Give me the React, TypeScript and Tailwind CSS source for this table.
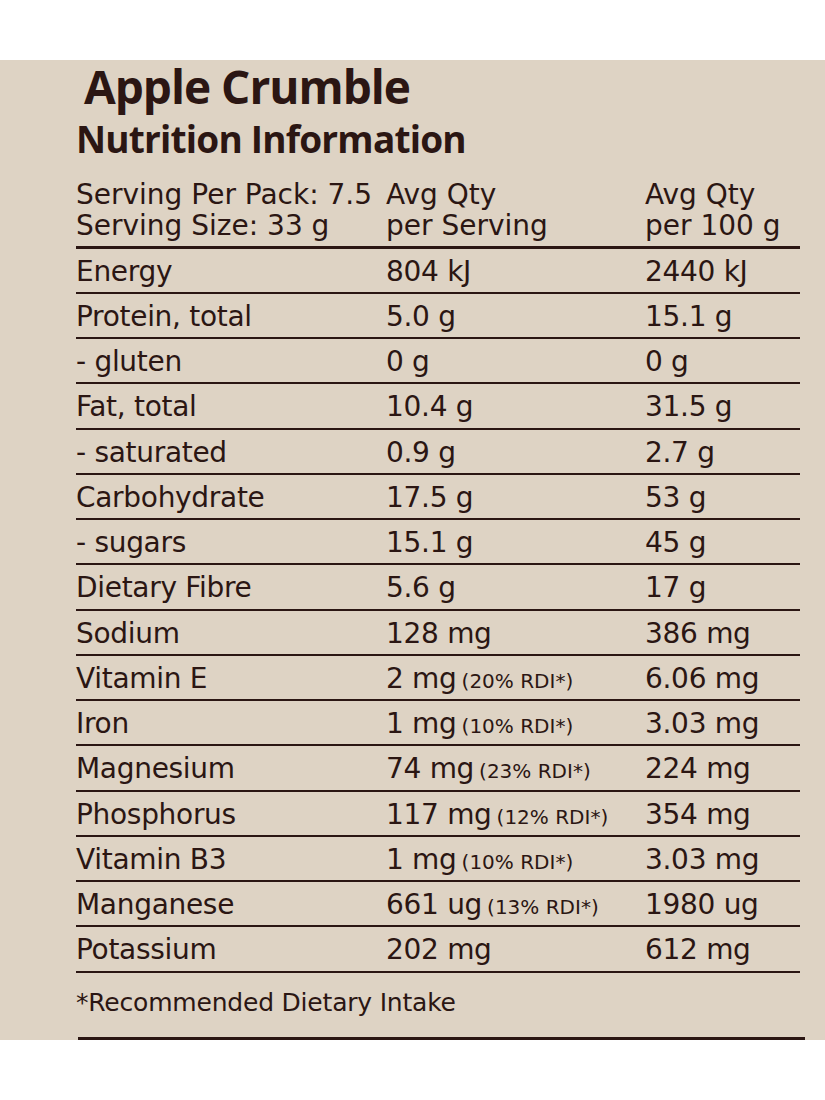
const rows: [string, string, string, string?][] = [
  ['Energy', '804 kJ', '2440 kJ'],
  ['Protein, total', '5.0 g', '15.1 g'],
  ['- gluten', '0 g', '0 g'],
  ['Fat, total', '10.4 g', '31.5 g'],
  ['- saturated', '0.9 g', '2.7 g'],
  ['Carbohydrate', '17.5 g', '53 g'],
  ['- sugars', '15.1 g', '45 g'],
  ['Dietary Fibre', '5.6 g', '17 g'],
  ['Sodium', '128 mg', '386 mg'],
  ['Vitamin E', '2 mg', '6.06 mg', '(20% RDI*)'],
  ['Iron', '1 mg', '3.03 mg', '(10% RDI*)'],
  ['Magnesium', '74 mg', '224 mg', '(23% RDI*)'],
  ['Phosphorus', '117 mg', '354 mg', '(12% RDI*)'],
  ['Vitamin B3', '1 mg', '3.03 mg', '(10% RDI*)'],
  ['Manganese', '661 ug', '1980 ug', '(13% RDI*)'],
  ['Potassium', '202 mg', '612 mg'],
];

export default function App() {
  return (
    <div className="w-[825px] h-[1100px] bg-white" style={{ fontFamily: '"DejaVu Sans", sans-serif' }}>
      <div className="h-[60px]" />
      <div className="bg-[#ded3c4] h-[980px] text-[#2b1613] flex flex-col">
        {/* Title */}
        <div
          className="pl-[84px] h-[54px] text-[46px] font-bold leading-[52px] tracking-[-1px]"
          style={{ fontFamily: '"Open Sans", sans-serif' }}
        >
          Apple Crumble
        </div>
        <div
          className="pl-[76px] pt-[3px] h-[53px] text-[37px] font-bold leading-[48px] tracking-[-0.8px]"
          style={{ fontFamily: '"Open Sans", sans-serif' }}
        >
          Nutrition Information
        </div>

        {/* Table */}
        <div className="ml-[76px] w-[724px] mt-[15px]">
          <div className="grid grid-cols-[310px_259px_155px] text-[28px] leading-[31px] pb-[5px] border-b-[3px] border-[#2b1613]">
            <div className="whitespace-nowrap">
              <div>Serving Per Pack: 7.5</div>
              <div>Serving Size: 33 g</div>
            </div>
            <div>
              <div>Avg Qty</div>
              <div>per Serving</div>
            </div>
            <div className="whitespace-nowrap">
              <div>Avg Qty</div>
              <div>per 100 g</div>
            </div>
          </div>

          {rows.map(([label, serving, per100, rdi], i) => (
            <div
              key={label}
              className={`grid grid-cols-[310px_259px_155px] border-b-[2px] border-[#2b1613] text-[28px] tracking-[-0.3px] ${
                i % 4 === 3 ? 'h-[46px] leading-[46px]' : 'h-[45px] leading-[45px]'
              }`}
            >
              <div>{label}</div>
              <div className="whitespace-nowrap">
                {serving}
                {rdi && <span className="text-[20px] ml-[5px] tracking-[0px]">{rdi}</span>}
              </div>
              <div className="whitespace-nowrap">{per100}</div>
            </div>
          ))}

          <div className="text-[25px] pt-[11px] h-[64px] tracking-[-0.2px]">*Recommended Dietary Intake</div>
        </div>
        <div className="mt-auto ml-[78px] w-[727px] h-[3px] bg-[#2b1613]" />
      </div>
    </div>
  );
}
